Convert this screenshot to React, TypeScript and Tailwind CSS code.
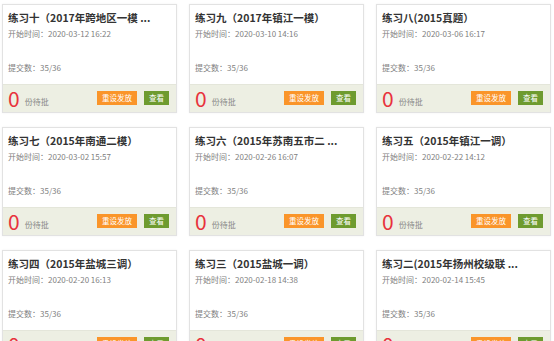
const exercises = [
  { title: "练习十（2017年跨地区一模 ...", time: "2020-03-12 16:22" },
  { title: "练习九（2017年镇江一模）", time: "2020-03-10 14:16" },
  { title: "练习八(2015真题）", time: "2020-03-06 16:17" },
  { title: "练习七（2015年南通二模）", time: "2020-03-02 15:57" },
  { title: "练习六（2015年苏南五市二 ...", time: "2020-02-26 16:07" },
  { title: "练习五（2015年镇江一调）", time: "2020-02-22 14:12" },
  { title: "练习四（2015年盐城三调）", time: "2020-02-20 16:13" },
  { title: "练习三（2015盐城一调）", time: "2020-02-18 14:38" },
  { title: "练习二(2015年扬州校级联 ...", time: "2020-02-14 15:45" },
];

function Card({ title, time }: { title: string; time: string }) {
  return (
    <div className="h-[109px] border border-[#e2e2e2] bg-white flex flex-col shadow-[0_0_2px_rgba(0,0,0,0.06)]">
      <div className="flex-1 px-[5px] pt-[5px]">
        <p className="text-[10.5px] leading-[16px] font-bold text-[#333] whitespace-nowrap">
          {title}
        </p>
        <p className="mt-[2px] text-[8px] leading-[12px] text-[#808080]">
          开始时间：{time}
        </p>
        <p className="mt-[22px] text-[8px] leading-[12px] text-[#808080]">
          提交数：35/36
        </p>
      </div>
      <div className="h-[28px] bg-[#edefe3] border-t border-[#e4e6da] flex items-center justify-between pl-[5px] pr-[7px] pb-[2px]">
        <div className="flex items-end gap-[5px]">
          <span className="text-[21px] leading-[20px] text-[#e8323c]">0</span>
          <span className="text-[8px] leading-[12px] text-[#888]">份待批</span>
        </div>
        <div className="flex items-center gap-[7px]">
          <button className="w-[40px] h-[14px] bg-[#fa952a] text-white text-[7.5px] leading-[14px]">
            重设发放
          </button>
          <button className="w-[25px] h-[14px] bg-[#6e9b2f] text-white text-[7.5px] leading-[14px]">
            查看
          </button>
        </div>
      </div>
    </div>
  );
}

export default function App() {
  return (
    <div
      className="bg-white min-h-[341px] pl-[2px] pt-[4px]"
      style={{ fontFamily: '"Noto Sans CJK SC", "Noto Sans", sans-serif' }}
    >
      <div className="grid grid-cols-[175px_175px_175px] gap-x-[12px] gap-y-[14px]">
        {exercises.map((e) => (
          <Card key={e.time} title={e.title} time={e.time} />
        ))}
      </div>
    </div>
  );
}
